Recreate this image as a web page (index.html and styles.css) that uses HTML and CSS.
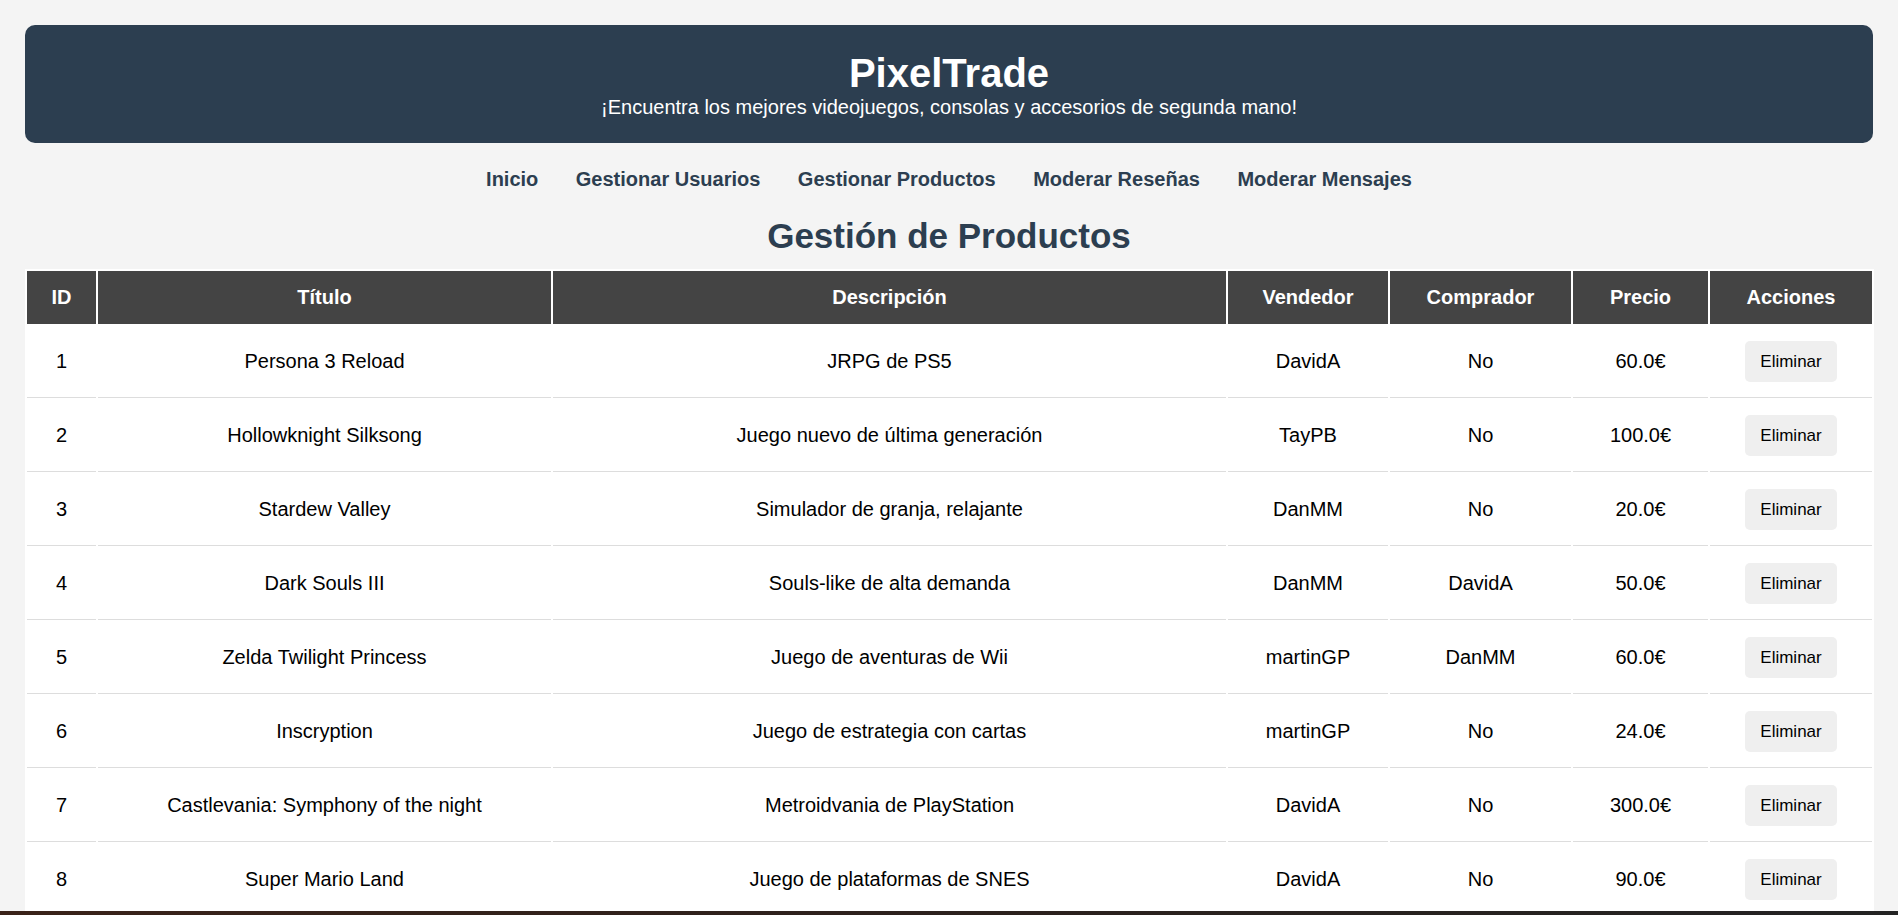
FILE: index.html
```html
<!DOCTYPE html>
<html lang="es">
<head>
<meta charset="utf-8">
<title>PixelTrade - Gestión de Productos</title>
<link rel="stylesheet" href="styles.css">
</head>
<body>
<header class="site-header">
  <h1 class="site-title">PixelTrade</h1>
  <p class="site-tagline">¡Encuentra los mejores videojuegos, consolas y accesorios de segunda mano!</p>
</header>
<nav class="main-nav">
  <a href="#">Inicio</a>
  <a href="#">Gestionar Usuarios</a>
  <a href="#">Gestionar Productos</a>
  <a href="#">Moderar Reseñas</a>
  <a href="#">Moderar Mensajes</a>
</nav>
<h2 class="page-title">Gestión de Productos</h2>
<table class="products">
  <thead>
    <tr>
      <th class="c-id">ID</th>
      <th class="c-title">Título</th>
      <th class="c-desc">Descripción</th>
      <th class="c-seller">Vendedor</th>
      <th class="c-buyer">Comprador</th>
      <th class="c-price">Precio</th>
      <th class="c-actions">Acciones</th>
    </tr>
  </thead>
  <tbody>
    <tr><td>1</td><td>Persona 3 Reload</td><td>JRPG de PS5</td><td>DavidA</td><td>No</td><td>60.0€</td><td><button class="btn-delete">Eliminar</button></td></tr>
    <tr><td>2</td><td>Hollowknight Silksong</td><td>Juego nuevo de última generación</td><td>TayPB</td><td>No</td><td>100.0€</td><td><button class="btn-delete">Eliminar</button></td></tr>
    <tr><td>3</td><td>Stardew Valley</td><td>Simulador de granja, relajante</td><td>DanMM</td><td>No</td><td>20.0€</td><td><button class="btn-delete">Eliminar</button></td></tr>
    <tr><td>4</td><td>Dark Souls III</td><td>Souls-like de alta demanda</td><td>DanMM</td><td>DavidA</td><td>50.0€</td><td><button class="btn-delete">Eliminar</button></td></tr>
    <tr><td>5</td><td>Zelda Twilight Princess</td><td>Juego de aventuras de Wii</td><td>martinGP</td><td>DanMM</td><td>60.0€</td><td><button class="btn-delete">Eliminar</button></td></tr>
    <tr><td>6</td><td>Inscryption</td><td>Juego de estrategia con cartas</td><td>martinGP</td><td>No</td><td>24.0€</td><td><button class="btn-delete">Eliminar</button></td></tr>
    <tr><td>7</td><td>Castlevania: Symphony of the night</td><td>Metroidvania de PlayStation</td><td>DavidA</td><td>No</td><td>300.0€</td><td><button class="btn-delete">Eliminar</button></td></tr>
    <tr><td>8</td><td>Super Mario Land</td><td>Juego de plataformas de SNES</td><td>DavidA</td><td>No</td><td>90.0€</td><td><button class="btn-delete">Eliminar</button></td></tr>
  </tbody>
</table>
<footer class="site-footer"></footer>
</body>
</html>
```
FILE: styles.css
```css
* {
  box-sizing: border-box;
}

html, body {
  margin: 0;
}

body {
  padding: 25px;
  background: #f4f4f4;
  font-family: "Liberation Sans", Arial, sans-serif;
  color: #000;
}

.site-header {
  background: #2c3e50;
  color: #fff;
  text-align: center;
  border-radius: 10px;
  padding: 25px 25px 24px;
}

.site-title {
  margin: 0;
  font-size: 40px;
  line-height: 46px;
  font-weight: bold;
}

.site-tagline {
  margin: 0;
  font-size: 20px;
  line-height: 23px;
}

.main-nav {
  display: flex;
  justify-content: center;
  gap: 37.5px;
  margin-top: 25px;
}

.main-nav a {
  color: #2c3e50;
  text-decoration: none;
  font-weight: bold;
  font-size: 20px;
  line-height: 23px;
}

.page-title {
  margin: 25px 0 13px;
  text-align: center;
  color: #2c3e50;
  font-size: 35px;
  line-height: 40px;
}

.products {
  width: 100%;
  table-layout: fixed;
  border-collapse: separate;
  border-spacing: 2px;
  background: #fff;
  font-size: 20px;
}

.products th {
  background: #444;
  color: #fff;
  font-weight: bold;
  padding: 15px;
  line-height: 23px;
  text-align: center;
}

.products td {
  padding: 15px;
  text-align: center;
  line-height: 23px;
  border-bottom: 1px solid #ddd;
  vertical-align: middle;
}

.c-id { width: 69px; }
.c-title { width: 453px; }
.c-desc { width: 673px; }
.c-seller { width: 160px; }
.c-buyer { width: 181px; }
.c-price { width: 135px; }
.c-actions { width: 162px; }

.btn-delete {
  font-family: "Liberation Sans", Arial, sans-serif;
  font-size: 17px;
  line-height: 21px;
  padding: 10px 15px;
  border: none;
  border-radius: 5px;
  background: #efefef;
  color: #000;
  cursor: pointer;
}

.site-footer {
  position: fixed;
  left: 0;
  right: 0;
  bottom: 0;
  height: 4px;
  background: linear-gradient(90deg, #3a2219, #2c211d 50%, #232323);
}
```
